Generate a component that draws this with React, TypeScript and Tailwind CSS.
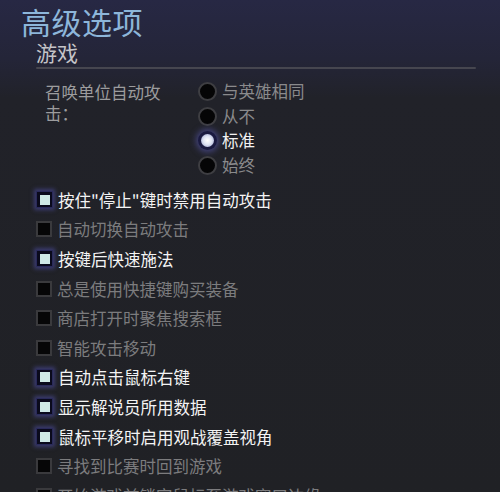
const font = { fontFamily: '"Noto Sans CJK SC", "Noto Sans", sans-serif' };

const radios = [
  { label: "与英雄相同", on: false },
  { label: "从不", on: false },
  { label: "标准", on: true },
  { label: "始终", on: false },
];

const options = [
  { label: "按住\"停止\"键时禁用自动攻击", on: true },
  { label: "自动切换自动攻击", on: false },
  { label: "按键后快速施法", on: true },
  { label: "总是使用快捷键购买装备", on: false },
  { label: "商店打开时聚焦搜索框", on: false },
  { label: "智能攻击移动", on: false },
  { label: "自动点击鼠标右键", on: true },
  { label: "显示解说员所用数据", on: true },
  { label: "鼠标平移时启用观战覆盖视角", on: true },
  { label: "寻找到比赛时回到游戏", on: false },
  { label: "开始游戏前锁定鼠标至游戏窗口边缘", on: false },
];

function Radio({ on }: { on: boolean }) {
  if (on) {
    return (
      <div className="w-[19px] h-[19px] shrink-0 rounded-full bg-[#1a1a40] shadow-[0_0_6px_2px_rgba(90,90,180,0.6)] flex items-center justify-center">
        <div className="w-[13px] h-[13px] rounded-full bg-[radial-gradient(circle,#ffffff_0%,#dfe4f4_45%,#8d94c4_100%)]" />
      </div>
    );
  }
  return <div className="w-[19px] h-[19px] shrink-0 rounded-full bg-[#050506] border-2 border-[#3e3e42]" />;
}

function Check({ on }: { on: boolean }) {
  if (on) {
    return (
      <div className="w-[17px] h-[17px] shrink-0 bg-[#0a0a1c] border border-[#2a2a5a] shadow-[0_0_4px_2px_rgba(80,80,170,0.55)] flex items-center justify-center">
        <div className="w-[10px] h-[10px] bg-[#cfe9e6]" />
      </div>
    );
  }
  return <div className="w-[16px] h-[16px] shrink-0 bg-[#060607] border-2 border-[#3a3a3d]" />;
}

export default function App() {
  return (
    <div
      className="w-[500px] h-[492px] overflow-hidden bg-[linear-gradient(180deg,#272844_0%,#242538_12%,#212229_20%,#202125_100%)]"
      style={font}
    >
      <div className="pl-[21px] pt-[4px]">
        <h1 className="text-[30px] leading-[34px] text-[#8db6da] tracking-[0.5px]">高级选项</h1>
      </div>
      <div className="pl-[36px] pr-[24px]">
        <h2 className="text-[21px] leading-[28px] text-[#c4c4c8]">游戏</h2>
        <div className="mt-[1px] h-[2px] bg-[#46464f] rounded-full" />
      </div>

      <div className="flex pl-[45px] pt-[13px]">
        <div className="w-[120px] text-[16.5px] leading-[21px] text-[#9c9c9e]">召唤单位自动攻击：</div>
        <div className="ml-[33px] flex flex-col gap-[5px]">
          {radios.map((r) => (
            <div key={r.label} className="flex items-center gap-[5px] h-[19.5px]">
              <Radio on={r.on} />
              <span className={`text-[16.5px] leading-[19px] whitespace-nowrap ${r.on ? "text-[#f2f2f2]" : "text-[#8a8a8c]"}`}>
                {r.label}
              </span>
            </div>
          ))}
        </div>
      </div>

      <div className="flex flex-col pl-[36px] pt-[10px]">
        {options.map((o) => (
          <div key={o.label} className="flex items-center gap-[5px] h-[29.6px]">
            <Check on={o.on} />
            <span className={`text-[16.5px] leading-[20px] whitespace-nowrap ${o.on ? "text-[#f4f4f4]" : "text-[#7c7c7e]"}`}>
              {o.label}
            </span>
          </div>
        ))}
      </div>
    </div>
  );
}
